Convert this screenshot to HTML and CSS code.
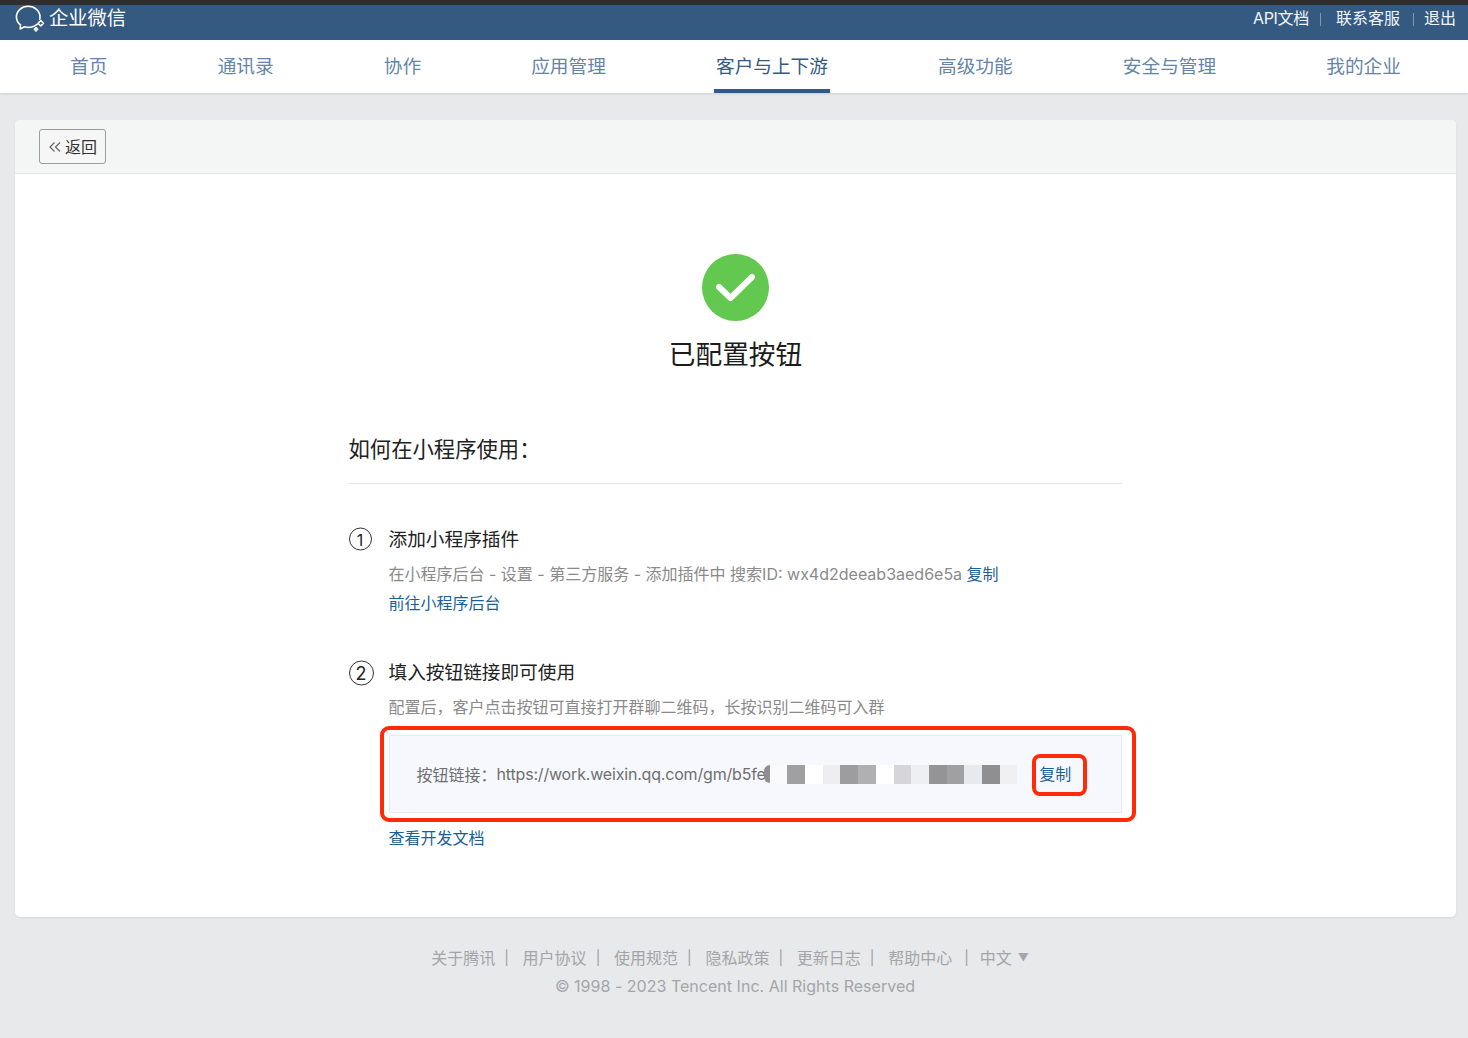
FILE: index.html
```html
<!DOCTYPE html>
<html lang="zh">
<head>
<meta charset="utf-8">
<title>企业微信</title>
<link rel="stylesheet" href="styles.css">
</head>
<body>
<header class="topbar">
  <div class="brand">
    <svg class="brand-icon" width="30" height="28" viewBox="0 0 30 28" fill="none" stroke="#fff" stroke-width="1.6" stroke-linecap="round" stroke-linejoin="round">
      <path d="M22.5 19.2c-1.2.9-3.6 2.3-5.6 2.8-2.5.6-5.2.5-7.4-.2L5.2 24l.3-4.1C2.800 17.800 1.400 15 1.400 12 1.400 6 6.800 1.300 13.200 1.300S25 6 25 12c0 .9-.1 1.500-.3 2.300"/>
      <path d="M25.800 15.600l2.700 2.700-2.700 2.700-2.700-2.700zM21 22.500l1.700 1.700-1.700 1.700-1.700-1.700z"/>
    </svg>
    <span class="brand-name">企业微信</span>
  </div>
  <nav class="toplinks">
    <a class="toplink toplink-api">API文档</a><i class="topsep"></i>
    <a class="toplink">联系客服</a><i class="topsep topsep-b"></i>
    <a class="toplink">退出</a>
  </nav>
</header>

<nav class="mainnav">
  <a class="navitem">首页</a>
  <a class="navitem">通讯录</a>
  <a class="navitem">协作</a>
  <a class="navitem">应用管理</a>
  <a class="navitem navitem-active">客户与上下游</a>
  <a class="navitem">高级功能</a>
  <a class="navitem">安全与管理</a>
  <a class="navitem">我的企业</a>
</nav>

<main class="card">
  <div class="card-head">
    <button class="back">
      <svg width="12" height="10" viewBox="0 0 12 10" fill="none" stroke="#666" stroke-width="1.200"><path d="M5.500.5L1 5l4.500 4.500M11 .5L6.500 5 11 9.500"/></svg>
      <span class="back-label">返回</span>
    </button>
  </div>
  <div class="card-body">
    <svg class="ok" width="67" height="67" viewBox="0 0 67 67">
      <circle cx="33.500" cy="33.500" r="33.500" fill="#62c84f"/>
      <path d="M17 33l11.500 11L50 23" fill="none" stroke="#fff" stroke-width="6" stroke-linecap="round" stroke-linejoin="round"/>
    </svg>
    <h1 class="title">已配置按钮</h1>
    <section class="guide">
      <h2 class="guide-head">如何在小程序使用：</h2>
      <div class="step step-one">
        <div class="step-title"><span class="num num-one">1</span>添加小程序插件</div>
        <p class="desc">在小程序后台 - 设置 - 第三方服务 - 添加插件中 搜索ID: wx4d2deeab3aed6e5a <a class="link">复制</a></p>
        <a class="link link-block">前往小程序后台</a>
      </div>
      <div class="step step-two">
        <div class="step-title"><span class="num num-two">2</span>填入按钮链接即可使用</div>
        <p class="desc">配置后，客户点击按钮可直接打开群聊二维码，长按识别二维码可入群</p>
        <div class="linkbox">
          <span class="linkbox-label">按钮链接：</span><span class="linkbox-url">https://work.weixin.qq.com/gm/b5fe</span>
          <span class="redact">
            <i class="sliver"></i>
            <i class="px s1"></i><i class="px s2"></i><i class="px s3"></i><i class="px s4"></i><i class="px s5"></i><i class="px s6"></i><i class="px s7"></i><i class="px s8"></i><i class="px s9"></i><i class="px s10"></i><i class="px s11"></i><i class="px s12"></i><i class="px s13"></i><i class="px s14"></i>
          </span>
          <a class="link copy">复制</a>
          <span class="mark mark-box"></span>
          <span class="mark mark-copy"></span>
        </div>
        <a class="link link-doc">查看开发文档</a>
      </div>
    </section>
  </div>
</main>

<footer class="foot">
  <div class="foot-links">
    <a>关于腾讯</a><i>|</i><a>用户协议</a><i>|</i><a>使用规范</a><i>|</i><a>隐私政策</a><i>|</i><a>更新日志</a><i>|</i><a>帮助中心</a><i class="near">|</i><a>中文</a><span class="caret">▼</span>
  </div>
  <div class="copyright">© 1998 - 2023 Tencent Inc. All Rights Reserved</div>
</footer>
</body>
</html>
```

FILE: styles.css
```css
* { box-sizing: border-box; }
html, body { margin: 0; padding: 0; }
body {
  width: 1468px;
  height: 1038px;
  overflow: hidden;
  background: #e8e9eb;
  font-family: Inter, "Noto Sans CJK SC", sans-serif;
  color: #222;
}
a { text-decoration: none; }
h1, h2, p { margin: 0; font-weight: 400; }
i { font-style: normal; }

.topbar {
  height: 40px;
  background: #345a82;
  border-top: 5px solid #2e2e2e;
  display: flex;
  justify-content: space-between;
  color: #fff;
}
.brand { display: flex; align-items: flex-start; padding-left: 15px; }
.brand-name { font-size: 19.300px; line-height: 26px; margin-left: 4px; }
.toplinks { display: flex; align-items: flex-start; padding-right: 12px; }
.toplink { font-size: 16px; line-height: 26px; color: #f2f5f8; }
.toplink-api { letter-spacing: -.3px; }
.topsep { width: 1px; height: 13px; background: #7f98b3; margin: 8px 15px 0 11px; }
.topsep-b { margin: 8px 10px 0 13px; }

.mainnav {
  height: 53px;
  background: #fff;
  box-shadow: 0 1px 2px rgba(0,0,0,.12);
  display: flex;
  padding-left: 70.200px;
  gap: 110.150px;
}
.navitem {
  font-size: 18.670px;
  line-height: 53px;
  color: #6584a8;
  height: 53px;
  white-space: nowrap;
}
.navitem-active {
  color: #345a82;
  border-bottom: 4px solid #2f5a8c;
  padding: 0 2px;
  margin: 0 -2px;
}

.card {
  margin: 27px 12px 0 15px;
  height: 797px;
  background: #fff;
  border-radius: 5px;
  box-shadow: 0 1px 2px rgba(0,0,0,.08);
}
.card-head {
  height: 54px;
  background: #f4f5f5;
  border-bottom: 1px solid #e2e4e8;
  border-radius: 5px 5px 0 0;
  padding: 9px 0 0 24px;
}
.back {
  width: 67px;
  height: 35px;
  padding: 0 0 0 9px;
  display: flex;
  align-items: center;
  gap: 4px;
  background: #f6f6f6;
  border: 1px solid #9c9c9c;
  border-radius: 3px;
  font: 16px Inter, "Noto Sans CJK SC", sans-serif;
  color: #333;
}
.back-label { margin-bottom: 2px; }
.card-body { display: flex; flex-direction: column; align-items: center; padding-top: 80px; }
.ok { display: block; }
.title { font-size: 26.670px; line-height: 40px; margin-top: 13px; color: #1c1c1c; }

.guide { width: 773px; margin-top: 59px; margin-left: -1px; }
.guide-head {
  font-size: 21.330px;
  line-height: 32px;
  padding-bottom: 18px;
  border-bottom: 1px solid #e2e4e6;
}
.step { padding-left: 40px; }
.step-one { margin-top: 42px; }
.step-two { margin-top: 44px; }
.step-title { position: relative; font-size: 18.670px; line-height: 28px; color: #222; }
.num {
  position: absolute;
  left: -40px;
  top: 50%;
  transform: translateY(-50%);
  display: flex;
  align-items: center;
  justify-content: center;
  border: 1.500px solid #333;
  border-radius: 50%;
  font-size: 16px;
  color: #222;
}
.num-one { width: 23px; height: 23px; margin-top: -1px; }
.num-two { width: 25px; height: 25px; font-size: 18px; }
.desc { font-size: 16px; line-height: 24px; color: #8a8a8a; margin-top: 8px; white-space: nowrap; }
.link { color: #1c5f95; font-size: 16px; line-height: 24px; }
.link-block { display: block; margin-top: 5px; }
.link-doc { display: block; margin-top: 13px; }

.linkbox {
  position: relative;
  display: flex;
  align-items: center;
  height: 78px;
  margin-top: 16px;
  padding-left: 27px;
  background: #f6f8fd;
  border: 1px solid #e6eaf2;
  font-size: 16px;
  color: #6f6f6f;
  white-space: nowrap;
}
.linkbox-url { letter-spacing: -.18px; }
.redact { display: flex; align-items: center; height: 19px; margin-left: -2px; }
.sliver { width: 6px; height: 18px; background: #8f8f92; border-radius: 6px 0 0 6px; }
.px { width: 17.700px; height: 19px; }
.s1 { background: #fafafc; } .s2 { background: #a0a0a2; } .s3 { background: #fff; }
.s4 { background: #eeeef1; } .s5 { background: #9d9da0; } .s6 { background: #b0b0b3; }
.s7 { background: #fff; } .s8 { background: #d6d6da; } .s9 { background: #eeeff2; }
.s10 { background: #949497; } .s11 { background: #a0a0a3; } .s12 { background: #e8e9ed; }
.s13 { background: #8f8f92; } .s14 { background: #f0f0f3; }
.copy { margin-left: 22px; }
.mark { position: absolute; border: 4px solid #ff2a08; }
.mark-box { left: -10px; top: -10px; width: 756px; height: 96px; border-radius: 9px; }
.mark-copy { left: 642px; top: 18px; width: 55px; height: 42px; border-radius: 8px; }

.foot { text-align: center; margin-top: 28px; font-size: 16px; color: #a3a5a8; }
.foot-links { display: flex; justify-content: center; line-height: 26px; margin-left: -8px; }
.foot-links i { width: 27.400px; padding-left: 9px; text-align: left; font-size: 14px; color: #9a9c9f; }
.foot-links i.near { padding-left: 12px; }
.caret { font-size: 11px; margin-left: 6px; line-height: 24px; }
.copyright { line-height: 26px; margin-top: 2px; padding-left: 2px; letter-spacing: .02px; }
```
